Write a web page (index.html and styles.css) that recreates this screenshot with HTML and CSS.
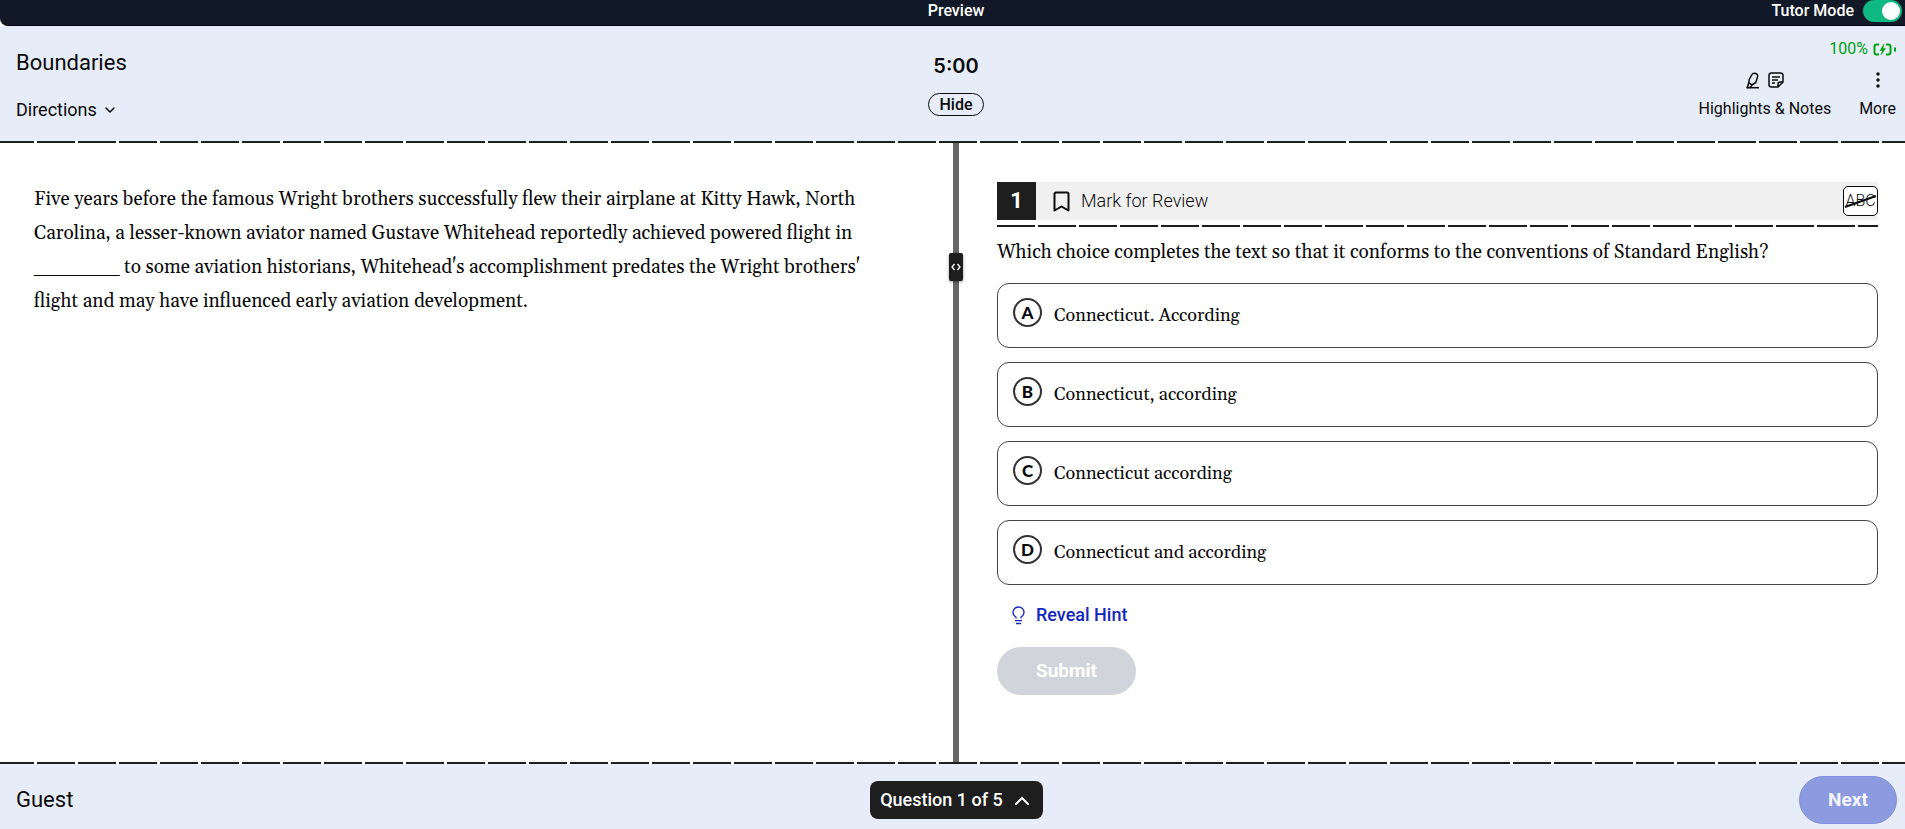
FILE: index.html
```html
<!DOCTYPE html>
<html lang="en">
<head>
<meta charset="utf-8">
<meta name="viewport" content="width=device-width, initial-scale=1">
<title>Boundaries</title>
<link rel="stylesheet" href="styles.css">
</head>
<body>
<div class="app">
  <div class="topbar">
    <span class="topbar-title">Preview</span>
    <label class="tutor">Tutor Mode <input class="switch" type="checkbox" role="switch" checked></label>
  </div>
  <header class="header">
    <div class="header-left">
      <h1 class="title">Boundaries</h1>
      <button class="plain directions" type="button">Directions
        <svg width="10" height="6" viewBox="0 0 10 6" fill="none" stroke="currentColor" stroke-width="1.5" stroke-linecap="round" stroke-linejoin="round"><path d="M1 1l4 4 4-4"/></svg>
      </button>
    </div>
    <div class="header-center">
      <div class="timer">5:00</div>
      <button class="hide" type="button">Hide</button>
    </div>
    <div class="header-right">
      <div class="battery">100%
        <svg width="23" height="13" viewBox="0 0 23 13" fill="none" stroke="currentColor" stroke-width="2"><path d="M6 1.500H3.500Q1.500 1.500 1.500 3.500V9.500Q1.500 11.500 3.500 11.500H6M13 1.500h2.500Q17.500 1.500 17.500 3.500V9.500Q17.500 11.500 15.500 11.500H13"/><path d="M22 4.500v4"/><path d="M11 1L7 7.500h2.500L8 12 12.500 5.500H10z" fill="currentColor" stroke-width=".5"/></svg>
      </div>
      <div class="tools">
        <button class="plain tool" type="button">
          <span class="tool-icons">
            <svg width="14" height="17" viewBox="0 0 14 17" fill="none" stroke="currentColor" stroke-width="1.500" stroke-linejoin="round"><path d="M3.200 7.500L6.300 2Q7.800.8 9.800 1.500 12 2.500 11.700 4.200L9.800 10.500 6 12.800 2.800 10.800z"/><path d="M2.800 10.800L1.200 15.500H4.500L6 12.800"/><path d="M.5 15.700H13"/></svg>
            <svg width="16" height="16" viewBox="0 0 16 16" fill="none" stroke="currentColor" stroke-width="1.500" stroke-linejoin="round"><path d="M3.500 1h9Q15 1 15 3.500V10l-5 5H3.500Q1 15 1 12.500v-9Q1 1 3.500 1zM15 10h-3q-2 0-2 2v3"/><path d="M4 5h8M4 8h6M4 11h3"/></svg>
          </span>
          Highlights &amp; Notes
        </button>
        <button class="plain tool" type="button">
          <span class="tool-icons">
            <svg width="4" height="16" viewBox="0 0 4 16" fill="currentColor"><circle cx="2" cy="2" r="1.700"/><circle cx="2" cy="8" r="1.700"/><circle cx="2" cy="14" r="1.700"/></svg>
          </span>
          More
        </button>
      </div>
    </div>
  </header>
  <div class="dashes dashes-page"></div>
  <main class="panes">
    <section class="passage">
      <p class="passage-text">Five years before the famous Wright brothers successfully flew their airplane at Kitty Hawk, North Carolina, a lesser-known aviator named Gustave Whitehead reportedly achieved powered flight in _______ to some aviation historians, Whitehead's accomplishment predates the Wright brothers' flight and may have influenced early aviation development.</p>
    </section>
    <div class="divider">
      <button class="handle" type="button" aria-label="Resize panes">
        <svg width="10" height="8" viewBox="0 0 10 8" fill="none" stroke="currentColor" stroke-width="1.300"><path d="M3.500 1L1 4l2.500 3M6.500 1L9 4 6.500 7"/></svg>
      </button>
    </div>
    <section class="question">
      <div class="question-bar">
        <span class="number">1</span>
        <button class="plain mark" type="button">
          <svg width="17" height="21" viewBox="0 0 17 21" fill="none" stroke="currentColor" stroke-width="2" stroke-linejoin="round"><path d="M1.500 19.500V3Q1.500 1.500 3 1.500h11Q15.500 1.500 15.500 3v16.500L8.500 15.500z"/></svg>
          Mark for Review
        </button>
        <button class="abc" type="button">ABC
          <svg class="abc-strike" width="33" height="13" viewBox="0 0 33 13" stroke="currentColor" stroke-width="2"><path d="M1 12L32 1"/></svg>
        </button>
      </div>
      <div class="dashes"></div>
      <p class="prompt">Which choice completes the text so that it conforms to the conventions of Standard English?</p>
      <div class="choices">
        <button class="choice" type="button"><span class="letter">A</span><span class="choice-text">Connecticut. According</span></button>
        <button class="choice" type="button"><span class="letter">B</span><span class="choice-text">Connecticut, according</span></button>
        <button class="choice" type="button"><span class="letter">C</span><span class="choice-text">Connecticut according</span></button>
        <button class="choice" type="button"><span class="letter">D</span><span class="choice-text">Connecticut and according</span></button>
      </div>
      <button class="plain hint" type="button">
        <svg width="13" height="19" viewBox="0 0 13 19" fill="none" stroke="currentColor" stroke-width="1.300"><path d="M4 12.500V11Q1 9 1 6.200a5.500 5.200 0 0 1 11 0Q12 9 9 11v1.500M3 14.700h7M4 17.500h5"/></svg>
        Reveal Hint
      </button>
      <button class="submit" type="button" disabled>Submit</button>
    </section>
  </main>
  <div class="dashes dashes-page"></div>
  <footer class="footer">
    <span class="user">Guest</span>
    <button class="navigator" type="button">Question 1 of 5
      <svg width="14" height="9" viewBox="0 0 14 9" fill="none" stroke="currentColor" stroke-width="2" stroke-linecap="round"><path d="M1 8l6-6 6 6"/></svg>
    </button>
    <button class="next" type="button" disabled>Next</button>
  </footer>
</div>
</body>
</html>
```
FILE: styles.css
```css
* { box-sizing: border-box; }

body {
  margin: 0;
  background: #fff;
  color: #0a0a0a;
  font-family: Roboto, "Liberation Sans", sans-serif;
  font-size: 16px;
  line-height: 20px;
}

h1, p { margin: 0; }

button {
  font: inherit;
  color: inherit;
  margin: 0;
}

svg { display: block; flex: none; }

.plain {
  background: none;
  border: 0;
  padding: 0;
}

.app {
  display: flex;
  flex-direction: column;
  min-height: 100vh;
}

/* Top bar */
.topbar {
  display: grid;
  grid-template-columns: 1fr auto 1fr;
  align-items: start;
  height: 26px;
  padding: 0 3px 0 10px;
  background: #111827;
  border-bottom: 1px solid #02040f;
  border-bottom-left-radius: 8px;
  color: #fff;
  font-weight: 500;
}

.topbar-title {
  grid-column: 2;
  padding-top: 1px;
}

.tutor {
  display: flex;
  justify-content: flex-end;
  align-items: center;
  gap: 9px;
}

.switch {
  appearance: none;
  display: flex;
  justify-content: flex-end;
  width: 39px;
  height: 22px;
  margin: 0;
  padding: 2px;
  border-radius: 11px;
  background: #10b981;
}

.switch::before {
  content: "";
  width: 18px;
  height: 18px;
  border-radius: 50%;
  background: #fff;
}

/* Header */
.header {
  display: grid;
  grid-template-columns: 1fr auto 1fr;
  min-height: 115px;
  padding: 0 9px 0 16px;
  background: #e6edf8;
}

.header-left {
  display: flex;
  flex-direction: column;
  align-items: flex-start;
  gap: 22px;
  padding-top: 23px;
}

.title, .user {
  font-size: 22px;
  font-weight: 400;
  line-height: 28px;
}

.directions {
  display: flex;
  align-items: center;
  gap: 8px;
  font-size: 18px;
  line-height: 22px;
}

.header-center {
  display: flex;
  flex-direction: column;
  align-items: center;
  gap: 15px;
  padding-top: 28px;
}

.timer {
  font-family: Inter, sans-serif;
  font-size: 20px;
  font-weight: 600;
  line-height: 24px;
}

.hide {
  height: 23px;
  padding: 0 10px;
  border: 1px solid #0a0a0a;
  border-radius: 12px;
  background: none;
  font-weight: 500;
  line-height: 19px;
}

.header-right {
  display: flex;
  flex-direction: column;
  align-items: flex-end;
  gap: 12px;
  padding-top: 13px;
}

.battery {
  display: flex;
  align-items: center;
  gap: 5px;
  color: #00a011;
}

.tools { display: flex; gap: 28px; }

.tool {
  display: flex;
  flex-direction: column;
  align-items: center;
  gap: 10px;
}

.tool-icons {
  display: flex;
  align-items: center;
  gap: 8px;
  height: 18px;
}

/* Dashed rules */
.dashes {
  height: 2px;
  background: repeating-linear-gradient(90deg, #1e1e1e 0 38px, transparent 38px 41px);
}

.dashes-page {
  background-color: #fff;
  background-position-x: -4px;
  background-size: calc(100% + 4px) 100%;
}

/* Panes */
.panes {
  flex: 1;
  display: grid;
  grid-template-columns: 1fr 6px 1fr;
  padding-left: 7px;
}

.passage, .prompt, .choice-text {
  font-family: Georgia, Gelasio, "Liberation Serif", serif;
}

.passage { padding: 39px 72px 32px 27px; }

.passage-text {
  font-size: 19px;
  line-height: 34px;
}

.divider {
  position: relative;
  background: #666;
}

.handle {
  position: absolute;
  top: 110px;
  left: 50%;
  display: grid;
  place-items: center;
  width: 14px;
  height: 28px;
  margin-left: -7px;
  padding: 0;
  border: 0;
  border-radius: 2px;
  background: #1e1e1e;
  box-shadow: 0 1px 3px #0006;
  color: #fff;
}

.question {
  display: flex;
  flex-direction: column;
  padding: 39px 27px 32px 38px;
}

.question-bar {
  display: flex;
  height: 38px;
  margin-bottom: 5px;
  background: #f0f0f0;
}

.number {
  display: grid;
  place-items: center;
  width: 39px;
  background: #1e1e1e;
  color: #fff;
  font-size: 22px;
  font-weight: 700;
}

.mark {
  display: flex;
  align-items: center;
  gap: 11px;
  margin: 0 auto 0 17px;
  font-size: 18px;
  font-weight: 300;
}

.abc {
  position: relative;
  align-self: center;
  width: 35px;
  height: 30px;
  padding: 0;
  border: 1px solid #0a0a0a;
  border-radius: 5px;
  background: #fff;
  font-weight: 300;
}

.abc-strike {
  position: absolute;
  top: 8px;
  left: 0;
}

.prompt {
  margin: 11px 0 16px;
  font-size: 19px;
  line-height: 29px;
}

.choices { display: grid; gap: 14px; }

.choice {
  display: flex;
  align-items: center;
  gap: 12px;
  min-height: 65px;
  padding: 0 15px;
  border: 1px solid #444;
  border-radius: 12px;
  background: #fff;
  text-align: left;
}

.letter {
  display: grid;
  place-items: center;
  width: 29px;
  height: 29px;
  margin-bottom: 6px;
  border: 2px solid #333;
  border-radius: 50%;
  font-family: Lato, sans-serif;
  font-size: 17px;
  font-weight: 900;
}

.choice-text { font-size: 18px; }

.hint {
  display: flex;
  align-self: flex-start;
  align-items: center;
  gap: 11px;
  margin: 20px 0 22px 15px;
  color: #1428c0;
  font-size: 18px;
  font-weight: 500;
}

.submit, .next {
  height: 48px;
  border: 0;
  border-radius: 24px;
  color: #fff;
  font-size: 19px;
  font-weight: 700;
}

.submit {
  align-self: flex-start;
  width: 139px;
  background: #d1d5db;
}

/* Footer */
.footer {
  display: grid;
  grid-template-columns: 1fr auto 1fr;
  align-items: start;
  min-height: 65px;
  padding: 12px 8px 5px 16px;
  background: #e6edf8;
}

.user { padding-top: 10px; }

.navigator {
  display: flex;
  align-items: center;
  gap: 12px;
  height: 38px;
  margin-top: 5px;
  padding: 0 14px 0 10px;
  border: 0;
  border-radius: 8px;
  background: #1e1e1e;
  color: #fff;
  font-size: 18px;
  font-weight: 500;
}

.next {
  justify-self: end;
  width: 98px;
  border: 1px solid #7f90dc;
  background: #8c9bdf;
  color: #f3f5fd;
}
```
